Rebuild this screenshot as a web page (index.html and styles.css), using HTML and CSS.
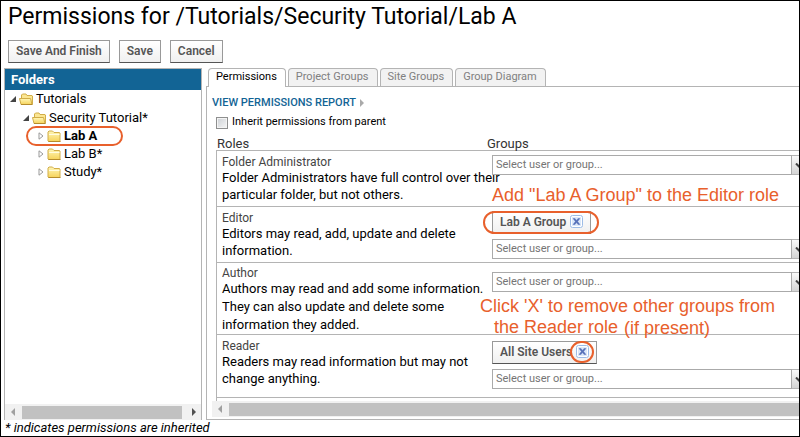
FILE: index.html
```html
<!DOCTYPE html>
<html lang="en">
<head>
<meta charset="utf-8">
<title>Permissions for /Tutorials/Security Tutorial/Lab A</title>
<link rel="stylesheet" href="styles.css">
</head>
<body>
<svg class="defs" aria-hidden="true">
  <defs>
    <linearGradient id="gold" x1="0" y1="0" x2="0" y2="1">
      <stop offset="0" stop-color="#fff7b8"/><stop offset="1" stop-color="#f6d35a"/>
    </linearGradient>
    <symbol id="folder" viewBox="0 0 14 14">
      <path d="M1.500 12.500l-.5-.5V3l1-1h3.500l1.500 1.500h5.500l.5.500v8.500z" fill="url(#gold)" stroke="#d1ad48"/>
      <path d="M2 5.500h10.500" stroke="#fffce0"/>
      <path d="M1.500 12.500h12" stroke="#b58c2c"/>
    </symbol>
    <symbol id="folder-open" viewBox="0 0 14 14">
      <path d="M2.500 11.500V3l1-1h3.500l1 1.500h5l.5.500v8z" fill="#fbe692" stroke="#d1ad48"/>
      <path d="M.5 6.500h11l1.500 6H2z" fill="url(#gold)" stroke="#d1ad48"/>
      <path d="M2 12.500h11.500" stroke="#b58c2c"/>
    </symbol>
    <symbol id="open" viewBox="0 0 6 6"><path d="M6 0v6H0z" fill="#444"/></symbol>
    <symbol id="closed" viewBox="0 0 6 8"><path d="M1 .8v6.400L5 4z" fill="#fff" stroke="#999"/></symbol>
    <symbol id="left" viewBox="0 0 4 8"><path d="M4 0v8L0 4z" fill="#a0a0a0"/></symbol>
    <symbol id="right" viewBox="0 0 4 8"><path d="M0 0v8l4-4z" fill="#505050"/></symbol>
    <symbol id="down" viewBox="0 0 8 5"><path d="M1 .5l3 3 3-3" fill="none" stroke="#444" stroke-width="2"/></symbol>
    <symbol id="remove" viewBox="0 0 13 13">
      <rect x=".5" y=".5" width="12" height="12" rx="2" fill="#fff" stroke="#9dbce6"/>
      <rect x="2" y="2" width="9" height="9" fill="#dce9fa"/>
      <path d="M3 3.500h2L6.500 5.500 8 3.500h2L7.600 6.500 10 9.500H8L6.500 7.500 5 9.500H3L5.400 6.500z" fill="#5570b8" stroke="#5570b8" stroke-width=".4"/>
    </symbol>
  </defs>
</svg>

<h1 class="title">Permissions for /Tutorials/Security Tutorial/Lab A</h1>

<div class="toolbar">
  <button class="btn" type="button">Save And Finish</button>
  <button class="btn" type="button">Save</button>
  <button class="btn" type="button">Cancel</button>
</div>

<main class="columns">
  <section class="folders">
    <h2 class="folders-title">Folders</h2>
    <ul class="tree">
      <li class="node level-1"><svg class="toggle open"><use href="#open"/></svg><svg class="folder"><use href="#folder-open"/></svg>Tutorials</li>
      <li class="node level-2"><svg class="toggle open"><use href="#open"/></svg><svg class="folder"><use href="#folder-open"/></svg>Security Tutorial*</li>
      <li class="node level-3 current"><svg class="toggle"><use href="#closed"/></svg><svg class="folder"><use href="#folder"/></svg>Lab A</li>
      <li class="node level-3"><svg class="toggle"><use href="#closed"/></svg><svg class="folder"><use href="#folder"/></svg>Lab B*</li>
      <li class="node level-3"><svg class="toggle"><use href="#closed"/></svg><svg class="folder"><use href="#folder"/></svg>Study*</li>
    </ul>
    <div class="scrollbar">
      <svg class="arrow"><use href="#left"/></svg>
      <div class="track"><div class="thumb"></div></div>
      <svg class="arrow"><use href="#right"/></svg>
    </div>
  </section>

  <section class="permissions">
    <nav class="tabs">
      <button class="tab active" type="button">Permissions</button>
      <button class="tab" type="button">Project Groups</button>
      <button class="tab" type="button">Site Groups</button>
      <button class="tab" type="button">Group Diagram</button>
    </nav>
    <div class="panel">
      <a class="report" href="#report">VIEW PERMISSIONS REPORT<svg class="more" viewBox="0 0 4 8"><path d="M0 0v8l4-4z" fill="#aaa"/></svg></a>
      <label class="inherit"><input class="check" type="checkbox">Inherit permissions from parent</label>
      <table class="roles">
        <thead>
          <tr><th class="role">Roles</th><th class="groups">Groups</th></tr>
        </thead>
        <tbody>
          <tr>
            <td class="role"><h3>Folder Administrator</h3><p>Folder Administrators have full control over their<br>particular folder, but not others.</p></td>
            <td class="groups">
              <div class="combo"><input type="text" aria-label="Folder Administrator groups" placeholder="Select user or group..."><button type="button" aria-label="Open list"><svg><use href="#down"/></svg></button></div>
            </td>
          </tr>
          <tr>
            <td class="role"><h3>Editor</h3><p>Editors may read, add, update and delete<br>information.</p></td>
            <td class="groups">
              <button class="btn tag" type="button">Lab A Group<svg class="remove"><use href="#remove"/></svg></button>
              <div class="combo"><input type="text" aria-label="Editor groups" placeholder="Select user or group..."><button type="button" aria-label="Open list"><svg><use href="#down"/></svg></button></div>
            </td>
          </tr>
          <tr>
            <td class="role long"><h3>Author</h3><p>Authors may read and add some information.<br>They can also update and delete some<br>information they added.</p></td>
            <td class="groups spaced">
              <div class="combo"><input type="text" aria-label="Author groups" placeholder="Select user or group..."><button type="button" aria-label="Open list"><svg><use href="#down"/></svg></button></div>
            </td>
          </tr>
          <tr class="last">
            <td class="role"><h3>Reader</h3><p>Readers may read information but may not<br>change anything.</p></td>
            <td class="groups">
              <button class="btn tag" type="button">All Site Users<svg class="remove"><use href="#remove"/></svg></button>
              <div class="combo"><input type="text" aria-label="Reader groups" placeholder="Select user or group..."><button type="button" aria-label="Open list"><svg><use href="#down"/></svg></button></div>
            </td>
          </tr>
        </tbody>
      </table>
      <div class="table-end"></div>
      <div class="scrollbar wide">
        <svg class="arrow"><use href="#left"/></svg>
        <div class="thumb"></div>
      </div>
    </div>
  </section>
</main>

<p class="footnote">* indicates permissions are inherited</p>

<div class="ring ring-folder"></div>
<div class="ring ring-group"></div>
<div class="ring ring-remove"></div>
<p class="note note-add">Add "Lab A Group" to the Editor role</p>
<p class="note note-click">Click 'X' to remove other groups from</p>
<p class="note note-reader">the Reader role</p>
<p class="note note-present">(if present)</p>
</body>
</html>
```
FILE: styles.css
```css
* {
  box-sizing: border-box;
}

body {
  position: relative;
  min-height: 100vh;
  margin: 0;
  padding: 0 0 0 3px;
  overflow: hidden;
  border: 1px solid #000;
  background: #fff;
  color: #000;
  font: 13px/18px Roboto, sans-serif;
}

h1, h2, h3, p, ul {
  margin: 0;
  padding: 0;
  font-weight: 400;
}

button, input {
  margin: 0;
  font-family: inherit;
}

svg {
  display: block;
  flex: none;
}

.defs {
  position: absolute;
  width: 0;
  height: 0;
}

.title {
  padding: 0 4px;
  font-size: 23px;
  line-height: 32px;
}

.toolbar {
  display: flex;
  gap: 9px;
  padding: 7px 4px 5px;
}

.btn {
  height: 23px;
  padding: 0 7px 2px;
  border: 1px solid #999;
  border-bottom-color: #555;
  background: linear-gradient(#fff, #f0f0f0);
  color: #555;
  font-size: 12px;
  font-weight: 600;
  line-height: 18px;
}

.columns {
  display: flex;
  gap: 4px;
}

.folders {
  display: flex;
  flex: none;
  flex-direction: column;
  width: 198px;
  border: 1px solid #b4b4b4;
  border-bottom: 0;
}

.folders-title {
  padding: 0 6px;
  background: #126495;
  color: #fff;
  font-size: 13px;
  font-weight: 700;
  line-height: 21px;
}

.tree {
  flex: 1;
  list-style: none;
}

.node {
  display: flex;
  align-items: center;
  height: 18px;
}

.level-1 {
  padding-left: 5px;
}

.level-2 {
  height: 19px;
  padding-left: 18px;
}

.level-3 {
  padding-left: 33px;
}

.current {
  font-weight: 700;
}

.toggle {
  width: 6px;
  height: 8px;
}

.open {
  height: 6px;
}

.folder {
  width: 14px;
  height: 14px;
  margin: 0 3px;
}

.scrollbar {
  display: flex;
  align-items: center;
  height: 16px;
  padding: 0 5px 0 6px;
  gap: 7px;
  background: #f1f1f1;
}

.arrow {
  width: 4px;
  height: 8px;
}

.track {
  flex: 1;
}

.thumb {
  width: 160px;
  height: 13px;
  background: #c1c1c1;
}

.permissions {
  flex: 1;
  min-width: 0;
}

.tabs {
  display: flex;
  gap: 2px;
  padding-left: 2px;
}

.tab {
  height: 18px;
  padding: 0 8px 2px 7px;
  border: 1px solid #b4b4b4;
  border-bottom: 0;
  border-radius: 4px 4px 0 0;
  background: #f2f2f2;
  color: #808080;
  font-size: 11px;
  line-height: 15px;
}

.active {
  height: 19px;
  margin-bottom: -1px;
  padding-bottom: 3px;
  background: #fff;
  color: #000;
}

.panel {
  padding: 8px 0 2px 5px;
  overflow: hidden;
  border: 1px solid #b4b4b4;
  border-right: 0;
}

.report {
  display: flex;
  align-items: center;
  gap: 4px;
  height: 16px;
  color: #126495;
  font-size: 11px;
  font-weight: 500;
  text-decoration: none;
}

.more {
  width: 4px;
  height: 8px;
}

.inherit {
  display: flex;
  gap: 4px;
  padding: 4px 4px 0;
  font-size: 11px;
  line-height: 14px;
}

.check {
  width: 12px;
  height: 12px;
  margin-top: 2px;
  appearance: none;
  border: 1px solid #8e8f8f;
  background: linear-gradient(135deg, #ccd0d5, #f6f6f6);
  box-shadow: inset 0 0 0 1px #f4f4f4;
}

.roles {
  width: calc(100% + 5px);
  margin: 8px 0 0 4px;
  border-spacing: 0;
  table-layout: fixed;
}

.roles th {
  height: 13px;
  padding: 0 0 0 1px;
  color: #333;
  font-weight: 400;
  line-height: 13px;
  text-align: left;
}

.roles th.groups {
  padding: 0;
}

.roles .role {
  width: 271px;
  white-space: nowrap;
}

.roles td {
  border-top: 1px solid #b4b4b4;
  vertical-align: top;
}

.roles td.role {
  padding: 5px 0 3px 5px;
  border-left: 1px solid #b4b4b4;
}

.roles td.groups {
  padding: 4px 0 0 5px;
}

.roles td.long {
  padding: 4px 0 0 5px;
}

.roles td.spaced {
  padding-top: 9px;
}

.roles .last td.role {
  padding-bottom: 10px;
}

.roles .last td.groups {
  padding-top: 6px;
}

.roles h3 {
  color: #444;
  font-size: 12px;
  line-height: 13px;
}

.roles p {
  line-height: 17px;
}

.roles .long p {
  line-height: 18px;
}

.combo {
  display: flex;
  height: 20px;
}

.combo input {
  flex: 1;
  min-width: 0;
  padding: 0 3px 2px;
  border: 1px solid #aaa;
  color: #333;
  font-size: 11px;
}

.combo input::placeholder {
  color: #757575;
  opacity: 1;
}

.combo button {
  width: 16px;
  padding: 0 3px;
  border: 1px solid #b4b4b4;
  border-left: 0;
  background: linear-gradient(#fafafa, #d4d4d4);
}

.combo svg {
  width: 8px;
  height: 5px;
}

.tag {
  display: flex;
  align-items: center;
  gap: 4px;
  margin-bottom: 5px;
}

.remove {
  width: 13px;
  height: 13px;
}

.table-end {
  height: 4px;
  margin-left: 4px;
  border-top: 1px solid #b4b4b4;
  border-left: 1px solid #b4b4b4;
}

.wide .thumb {
  flex: 1;
}

.wide {
  padding-right: 0;
}

.footnote {
  padding-left: 1px;
  font-style: italic;
  line-height: 16px;
}

.ring {
  position: absolute;
  border: 2px solid #e8602c;
  border-radius: 12px;
}

.ring-folder {
  top: 125px;
  left: 25px;
  width: 97px;
  height: 20px;
}

.ring-group {
  top: 210px;
  left: 482px;
  width: 116px;
  height: 23px;
}

.ring-remove {
  top: 340px;
  left: 569px;
  width: 24px;
  height: 22px;
}

.note {
  position: absolute;
  color: #e8602c;
  font: 18px/20px "Liberation Sans", sans-serif;
  white-space: nowrap;
}

.note-add {
  top: 184px;
  left: 491px;
}

.note-click {
  top: 295px;
  left: 479px;
}

.note-reader {
  top: 316px;
  left: 493px;
}

.note-present {
  top: 317px;
  left: 623px;
}
```
